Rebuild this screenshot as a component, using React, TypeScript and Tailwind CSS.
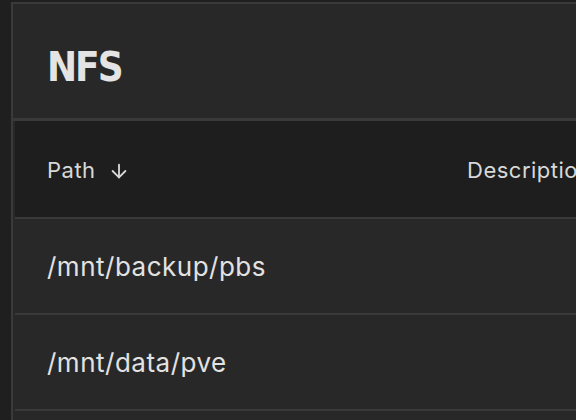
import React from "react"
import { ArrowDown } from "lucide-react"

const rows = [
    { path: "/mnt/backup/pbs", description: "" },
    { path: "/mnt/data/pve", description: "" },
]

export default function App() {
    return (
        <div className="h-[420px] w-[576px] overflow-hidden bg-[#1f1f1f] pl-[11px] pt-[2px] font-['Inter',sans-serif]">
            <div className="h-[600px] w-[700px] border-l-2 border-t-2 border-[#3a3a3a] bg-[#282828]">
                <div className="flex h-[114px] items-center pl-[34px] pt-[12px]">
                    <h1 className="font-['DejaVu_Sans_Condensed','DejaVu_Sans',sans-serif] text-[40px] font-bold leading-none tracking-[-2px] text-[#e4e4e4]">
                        NFS
                    </h1>
                </div>
                <div className="border-t-[3px] border-[#3a3a3a] pl-[2px]">
                    <table className="w-full border-collapse text-left">
                        <thead>
                            <tr className="h-[97px] bg-[#1e1e1e] text-[22px] tracking-[0.5px] text-[#d8d8d8]">
                                <th className="w-[420px] pl-[32px] pt-[3px] font-normal">
                                    <span className="flex items-center gap-[12px]">
                                        Path
                                        <ArrowDown size={22} strokeWidth={2} />
                                    </span>
                                </th>
                                <th className="pl-[32px] pt-[3px] font-normal">Description</th>
                            </tr>
                        </thead>
                        <tbody>
                            {rows.map((row) => (
                                <tr
                                    key={row.path}
                                    className="h-[96px] border-t-2 border-[#3a3a3a] text-[26px] tracking-[0.5px] text-[#e2e2e2]"
                                >
                                    <td className="pl-[32px]">{row.path}</td>
                                    <td className="pl-[32px]">{row.description}</td>
                                </tr>
                            ))}
                            <tr className="h-[96px] border-t-2 border-[#3a3a3a]">
                                <td />
                                <td />
                            </tr>
                        </tbody>
                    </table>
                </div>
            </div>
        </div>
    )
}
